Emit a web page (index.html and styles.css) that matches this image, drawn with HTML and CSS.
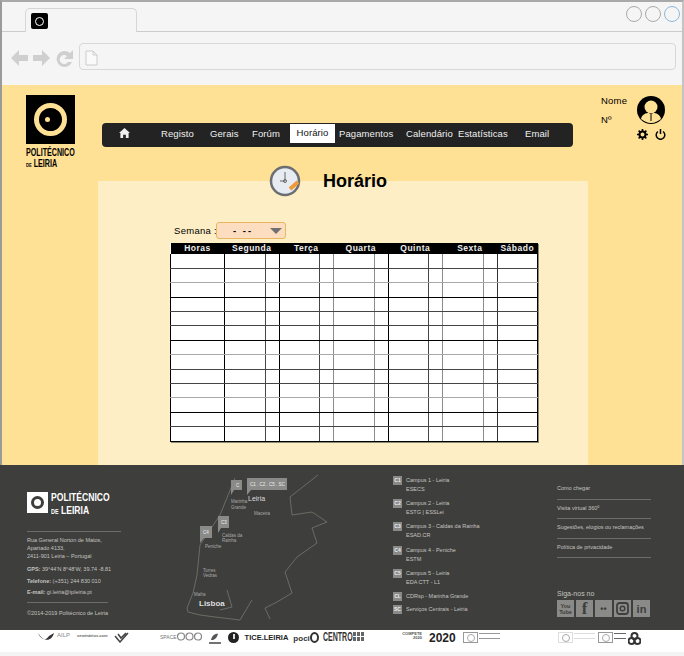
FILE: index.html
```html
<!DOCTYPE html>
<html lang="pt-PT">

<head>
    <meta charset="UTF-8" />
    <meta name="viewport" content="width=device-width, initial-scale=1.0" />
    <title>Horário</title>
    <link rel="stylesheet" href="styles.css">
</head>

<body>
    <div class="browser">
        <div class="tabbar">
            <div class="tab">
                <span class="favicon"><i></i></span>
            </div>
            <div class="win-btns"><span></span><span></span><span class="blue"></span></div>
        </div>
        <div class="toolbar">
            <svg class="tool-icons" width="64" height="20" viewBox="0 0 64 20">
                <path d="M0 10 8 2v5h9v6H8v5z" />
                <path d="M39 10 31 2v5h-9v6h9v5z" />
                <path d="M59 5a8 8 0 1 0 2 9h-4a4.500 4.500 0 1 1-1-6l-3 3h9V2z" />
            </svg>
            <div class="address">
                <svg width="13" height="16" viewBox="0 0 13 16"><path d="M1 1h7l4 4v10H1zM8 1v4h4" fill="#fafafa" stroke="#ccc" /></svg>
            </div>
        </div>
    </div>

    <div class="page">
        <header class="top">
            <div class="logo">
                <div class="logo-box"><i></i></div>
                <div class="logo-text">POLITÉCNICO<br><small>DE</small> LEIRIA</div>
            </div>
            <nav class="menu">
                <a class="home" href="#">
                    <svg width="11" height="10" viewBox="0 0 12 11"><path d="M6 0 0 5.500h1.500V11h3V7.500h3V11h3V5.500H12z" fill="#eee" /></svg>
                </a>
                <a href="#">Registo</a>
                <a href="#">Gerais</a>
                <a href="#">Forúm</a>
                <a class="active" href="#">Horário</a>
                <a class="after-active" href="#">Pagamentos</a>
                <a href="#">Calendário</a>
                <a href="#">Estatísticas</a>
                <a href="#">Email</a>
            </nav>
            <div class="user">
                <div class="user-text">
                    <span>Nome</span>
                    <span>Nº</span>
                </div>
                <div class="user-side">
                    <svg width="28" height="28" viewBox="0 0 28 28">
                        <circle cx="14" cy="14" r="14" fill="#000" />
                        <circle cx="14" cy="11" r="6.500" fill="#ffe195" />
                        <path d="M4 23c1-5 5-6 8-6l2 2 2-2c3 0 7 1 8 6-3 2-6 4-10 4s-7-2-10-4z" fill="#ffe195" />
                        <path d="M14 19v6" stroke="#000" />
                    </svg>
                    <div class="user-icons">
                        <svg width="11" height="11" viewBox="0 0 11 11">
                            <circle cx="5.500" cy="5.500" r="3" fill="none" stroke="#000" stroke-width="2" />
                            <path d="M5.500 0v11M0 5.500h11M1.600 1.600l7.800 7.800M9.400 1.600l-7.800 7.800" stroke="#000" stroke-width="1.600" stroke-dasharray="2 7 2" />
                        </svg>
                        <svg width="11" height="11" viewBox="0 0 11 11">
                            <path d="M3 2.500a4.300 4.300 0 1 0 5 0M5.500 0v5" fill="none" stroke="#000" stroke-width="1.500" />
                        </svg>
                    </div>
                </div>
            </div>
        </header>

        <main class="panel">
            <div class="title-row">
                <svg width="32" height="32" viewBox="0 0 32 32">
                    <circle cx="16" cy="16" r="14" fill="#e6ecf2" stroke="#6b6f73" stroke-width="2.500" />
                    <path d="M16 7v9h-5" fill="none" stroke="#666" stroke-width="1" />
                    <circle cx="16" cy="16" r="1.500" fill="none" stroke="#666" />
                    <path d="M21 24 29 17" stroke="#ee9a3a" stroke-width="4" />
                </svg>
                <h1>Horário</h1>
            </div>

            <div class="week">
                <label>Semana :</label>
                <div class="week-select">
                    <span>- --</span>
                    <i></i>
                </div>
            </div>

            <table class="timetable">
                <colgroup>
                    <col class="c-hour">
                    <col class="c-a"><col class="c-b">
                    <col class="c-a"><col class="c-b">
                    <col class="c-a"><col class="c-b">
                    <col class="c-a"><col class="c-b">
                    <col class="c-a"><col class="c-b">
                    <col class="c-a">
                </colgroup>
                <thead>
                    <tr>
                        <th>Horas</th>
                        <th colspan="2">Segunda</th>
                        <th colspan="2">Terça</th>
                        <th colspan="2">Quarta</th>
                        <th colspan="2">Quinta</th>
                        <th colspan="2">Sexta</th>
                        <th>Sábado</th>
                    </tr>
                </thead>
                <tbody>
                    <tr class="mid"><td></td><td></td><td></td><td></td><td></td><td></td><td></td><td></td><td></td><td></td><td></td><td></td></tr>
                    <tr class="lite"><td></td><td></td><td></td><td></td><td></td><td></td><td></td><td></td><td></td><td></td><td></td><td></td></tr>
                    <tr><td></td><td></td><td></td><td></td><td></td><td></td><td></td><td></td><td></td><td></td><td></td><td></td></tr>
                    <tr class="mid"><td></td><td></td><td></td><td></td><td></td><td></td><td></td><td></td><td></td><td></td><td></td><td></td></tr>
                    <tr class="mid"><td></td><td></td><td></td><td></td><td></td><td></td><td></td><td></td><td></td><td></td><td></td><td></td></tr>
                    <tr><td></td><td></td><td></td><td></td><td></td><td></td><td></td><td></td><td></td><td></td><td></td><td></td></tr>
                    <tr class="lite"><td></td><td></td><td></td><td></td><td></td><td></td><td></td><td></td><td></td><td></td><td></td><td></td></tr>
                    <tr class="mid"><td></td><td></td><td></td><td></td><td></td><td></td><td></td><td></td><td></td><td></td><td></td><td></td></tr>
                    <tr class="mid"><td></td><td></td><td></td><td></td><td></td><td></td><td></td><td></td><td></td><td></td><td></td><td></td></tr>
                    <tr class="lite"><td></td><td></td><td></td><td></td><td></td><td></td><td></td><td></td><td></td><td></td><td></td><td></td></tr>
                    <tr><td></td><td></td><td></td><td></td><td></td><td></td><td></td><td></td><td></td><td></td><td></td><td></td></tr>
                    <tr class="mid"><td></td><td></td><td></td><td></td><td></td><td></td><td></td><td></td><td></td><td></td><td></td><td></td></tr>
                    <tr><td></td><td></td><td></td><td></td><td></td><td></td><td></td><td></td><td></td><td></td><td></td><td></td></tr>
                </tbody>
            </table>
        </main>
    </div>

    <footer class="footer">
        <div class="f-left">
            <div class="f-logo">
                <div class="f-logo-box"><i></i></div>
                <div class="f-logo-text">POLITÉCNICO<br><small>DE</small> LEIRIA</div>
            </div>
            <hr>
            <p class="addr">Rua General Norton de Matos,<br>Apartado 4133,<br>2411-901 Leiria – Portugal</p>
            <p><b>GPS:</b> 39°44'N 8°48'W, 39.74 -8.81</p>
            <p><b>Telefone:</b> (+351) 244 830 010</p>
            <p><b>E-mail:</b> gi.leiria@ipleiria.pt</p>
            <hr class="short">
            <p>©2014-2019 Politécnico de Leiria</p>
        </div>

        <svg class="map" width="200" height="165" viewBox="0 0 200 165">
            <path d="M138 10 110 32 112 50 132 47 147 57 132 63 137 78 117 92 105 107 112 128 97 137 85 143 90 154M72 135 60 155 35 152 20 150 8 147 7 143 13 128 17 110 20 80 40 50 55 13M47 125 52 142 40 145" fill="none" stroke="#77776f" stroke-width=".8" />
            <path d="M51 15h11v10h-8l-3 5zM67 13h40v12H71l-4 5zM38 51h11v12h-8l-3 5zM20 61h12v12h-8l-4 5z" fill="#8a8a88" />
            <text x="56" y="22" class="pin">C</text>
            <text x="70" y="21" class="pin">C1 . C2 . C5 . SC</text>
            <text x="41" y="59" class="pin">C3</text>
            <text x="23" y="69" class="pin">C4</text>
            <text x="68" y="36" class="city">Leiria</text>
            <text x="19" y="141" class="city big">Lisboa</text>
            <text x="51" y="38" class="town">Marinha</text>
            <text x="51" y="44" class="town">Grande</text>
            <text x="74" y="50" class="town">Maceira</text>
            <text x="42" y="72" class="town">Caldas da</text>
            <text x="42" y="77" class="town">Rainha</text>
            <text x="25" y="83" class="town">Peniche</text>
            <text x="23" y="107" class="town">Torres</text>
            <text x="23" y="112" class="town">Vedras</text>
            <text x="14" y="131" class="town">Mafra</text>
        </svg>

        <ul class="campus">
            <li><b>C1</b><span>Campus 1 - Leiria<br>ESECS</span></li>
            <li><b>C2</b><span>Campus 2 - Leiria<br>ESTG | ESSLei</span></li>
            <li><b>C3</b><span>Campus 3 - Caldas da Rainha<br>ESAD.CR</span></li>
            <li><b>C4</b><span>Campus 4 - Peniche<br>ESTM</span></li>
            <li><b>C5</b><span>Campus 5 - Leiria<br>EDA CTT - L1</span></li>
            <li class="single"><b>CL</b><span>CDRsp - Marinha Grande</span></li>
            <li class="single"><b>SC</b><span>Serviços Centrais - Leiria</span></li>
        </ul>

        <div class="f-right">
            <a href="#">Como chegar</a>
            <a href="#">Visita virtual 360º</a>
            <a href="#">Sugestões, elogios ou reclamações</a>
            <a href="#">Política de privacidade</a>
            <p class="follow">Siga-nos no</p>
            <div class="social">
                <span class="s-yt">You<br>Tube</span>
                <span class="s-fb">f</span>
                <span class="s-fl">••</span>
                <span>
                    <svg width="13" height="13" viewBox="0 0 13 13"><rect x="1" y="1" width="11" height="11" rx="2.500" fill="none" stroke="#3e3e3c" stroke-width="1.800" /><circle cx="6.500" cy="6.500" r="2.300" fill="none" stroke="#3e3e3c" stroke-width="1.500" /></svg>
                </span>
                <span class="s-in">in</span>
            </div>
        </div>
    </footer>

    <div class="partners">
        <div class="p-group p-one">
            <svg width="16" height="9" viewBox="0 0 16 9"><path d="M0 1c3 7 8 8 11 3l5-3c-2 8-10 10-16 0z" fill="#333" /></svg>
            <span class="p-ailp">AILP</span>
            <span class="p-sem">seminários.com</span>
            <svg width="15" height="11" viewBox="0 0 15 11"><path d="M1 4l5 6 8-9M4 2l3 4 5-5" fill="none" stroke="#444" stroke-width="1.500" /></svg>
        </div>
        <div class="p-group p-two">
            <span class="p-space">SPACE</span>
            <svg width="25" height="9" viewBox="0 0 25 9"><g fill="none" stroke="#888" stroke-width="1.200"><circle cx="4" cy="4.500" r="3.500" /><circle cx="12.500" cy="4.500" r="3.500" /><circle cx="21" cy="4.500" r="3.500" /></g></svg>
            <svg class="p-gap" width="12" height="12" viewBox="0 0 12 12"><path d="M2 8c1-5 5-7 7-6-1 3-2 5-5 6z" fill="#555" /><path d="M0 11h12" stroke="#444" stroke-width="1.500" /></svg>
            <svg class="p-gap" width="11" height="11" viewBox="0 0 11 11"><circle cx="5.500" cy="5.500" r="5.500" fill="#222" /><path d="M5 2h2v5H5z" fill="#ddd" /></svg>
            <span class="p-tice">TICE.LEIRIA</span>
            <span class="p-poci">poci</span>
            <svg width="9" height="11" viewBox="0 0 9 11"><path d="M1 5.500a3.500 4.500 0 1 1 7 0 3.500 4.500 0 1 1-7 0" fill="none" stroke="#333" stroke-width="2" /></svg>
            <span class="p-centro">CENTRO</span>
            <svg width="11" height="9" viewBox="0 0 11 9"><path d="M0 0h11v9H0z" fill="#666" /><path d="M3.500 0v9M7.500 0v9M0 4.500h11" stroke="#fff" /></svg>
        </div>
        <div class="p-group p-three">
            <span class="p-compete">COMPETE<br>2020</span>
            <span class="p-2020">2020</span>
            <span class="p-eu"></span>
            <span class="p-lines"></span>
        </div>
        <div class="p-group p-four">
            <span class="p-eu pale"></span>
            <span class="p-lines pale"></span>
            <span class="p-eu"></span>
            <span class="p-lines short"></span>
            <svg width="13" height="13" viewBox="0 0 13 13"><g fill="none" stroke="#333" stroke-width="2"><circle cx="6.500" cy="4" r="3" /><circle cx="3.500" cy="9" r="3" /><circle cx="9.500" cy="9" r="3" /></g></svg>
        </div>
    </div>
</body>

</html>
```

FILE: styles.css
```css
* {
    box-sizing: border-box;
}

html,
body {
    margin: 0;
    padding: 0;
}

body {
    width: 684px;
    height: 656px;
    overflow: hidden;
    font-family: "Liberation Sans", Arial, sans-serif;
    color: #000;
    background-color: #fff;
}

/* browser frame */
.browser {
    height: 85px;
    background-color: #f5f5f5;
    border-top: 2px solid #a9a9a9;
    border-left: 2px solid #9a9a9a;
    border-right: 2px solid #c4c4c4;
}

.tabbar {
    height: 30px;
    border-bottom: 1px solid #ccc;
    display: flex;
    justify-content: space-between;
    padding-left: 23px;
    padding-right: 2px;
}

.tab {
    width: 112px;
    height: 24px;
    margin-top: 6px;
    background-color: #f5f5f5;
    border: 1px solid #d6d6d6;
    border-bottom: none;
    border-radius: 5px 5px 0 0;
    padding: 4px 0 0 5px;
}

.favicon {
    display: block;
    width: 17px;
    height: 16px;
    background-color: #000;
    border-radius: 2px;
    padding: 4px;
}

.favicon i {
    display: block;
    width: 9px;
    height: 9px;
    border: 1.500px solid #fff;
    border-radius: 50%;
}

.win-btns {
    display: flex;
    gap: 3px;
    margin-top: 4px;
}

.win-btns span {
    width: 16px;
    height: 16px;
    border: 1px solid #aaa;
    border-radius: 50%;
}

.win-btns .blue {
    border-color: #8db8dc;
}

.toolbar {
    display: flex;
    padding: 11px 6px 0 9px;
}

.tool-icons {
    fill: #cfcfcf;
    margin-top: 5px;
    width: 64px;
    flex: none;
}

.address {
    flex: 1;
    margin-left: 4px;
    height: 27px;
    background-color: #f5f5f5;
    border: 1px solid #d8d8d8;
    border-radius: 4px;
    padding: 6px 0 0 5px;
}

/* page */
.page {
    height: 380px;
    background-color: #ffe195;
    border-left: 2px solid #9a9a9a;
    border-right: 2px solid #c4c4c4;
}

.top {
    height: 96px;
    display: flex;
    align-items: flex-start;
    padding-left: 24px;
}

.logo {
    width: 49px;
    margin-top: 10px;
}

.logo-box {
    width: 49px;
    height: 49px;
    background-color: #000;
    padding: 8px;
}

.logo-box i {
    display: block;
    width: 33px;
    height: 33px;
    border: 5px solid #ffe195;
    border-radius: 50%;
    position: relative;
}

.logo-box i::after {
    content: "";
    position: absolute;
    left: 6px;
    top: 9px;
    width: 5px;
    height: 5px;
    border-radius: 50%;
    background-color: #ffe195;
}

.logo-text {
    margin-top: 3px;
    font-size: 10.500px;
    line-height: 11px;
    font-weight: bold;
    white-space: nowrap;
    transform: scaleX(.68);
    transform-origin: left top;
}

.logo-text small {
    font-size: 6px;
}

.menu {
    width: 471px;
    height: 24px;
    margin-left: 27px;
    margin-top: 38px;
    padding-bottom: 4px;
    background-color: #232323;
    border-radius: 4px;
    display: grid;
    grid-template-columns: 59px 49px 42px 38px 45px 71px 52px 67px 1fr;
    align-items: center;
    font-size: 9.500px;
    letter-spacing: .1px;
}

.menu a {
    color: #f0f0f0;
    text-decoration: none;
    white-space: nowrap;
}

.menu .home {
    padding-left: 17px;
    height: 10px;
    line-height: 0;
}

.menu .active {
    background-color: #fff;
    color: #111;
    height: 19px;
    line-height: 17px;
    text-align: center;
    align-self: start;
    margin-top: 1px;
}

.menu .after-active {
    padding-left: 4px;
}

.user {
    display: flex;
    margin-left: 28px;
    margin-top: 10px;
    font-size: 9.500px;
    letter-spacing: .2px;
}

.user-text {
    display: flex;
    flex-direction: column;
    gap: 7px;
    width: 35px;
    line-height: 12px;
}

.user-side {
    display: flex;
    flex-direction: column;
    align-items: center;
    width: 30px;
    margin-top: 1px;
}

.user-icons {
    display: flex;
    gap: 7px;
    margin-top: 5px;
    margin-left: 1px;
}

.panel {
    display: flow-root;
    width: 490px;
    height: 284px;
    margin-left: 96px;
    background-color: #fdeec5;
}

.title-row {
    display: flex;
    align-items: center;
    height: 32px;
    margin-top: -16px;
    padding-left: 171px;
}

.title-row h1 {
    margin: 0 0 0 22px;
    font-size: 18px;
    line-height: 22px;
    font-weight: bold;
}

.week {
    display: flex;
    align-items: center;
    margin-top: 25px;
    padding-left: 76px;
    font-size: 9.500px;
    letter-spacing: .3px;
}

.week label {
    width: 42px;
    white-space: nowrap;
}

.week-select {
    width: 70px;
    height: 17px;
    background-color: #fdddc0;
    border: 1px solid #e8b860;
    border-radius: 3px;
    display: flex;
    align-items: center;
    padding-left: 16px;
    letter-spacing: 2px;
    font-weight: bold;
}

.week-select span {
    width: 37px;
}

.week-select i {
    width: 0;
    height: 0;
    border-left: 6px solid transparent;
    border-right: 6px solid transparent;
    border-top: 6px solid #707070;
}

/* timetable */
.timetable {
    width: 367px;
    margin-left: 72px;
    margin-top: 4px;
    border-collapse: collapse;
    table-layout: fixed;
    background-color: #fff;
    box-shadow: 1px 1px 0 #8a8a70;
}

.c-hour {
    width: 54px;
}

.c-a {
    width: 40.500px;
}

.c-b {
    width: 14px;
}

.timetable th {
    height: 11px;
    padding: 0;
    background-color: #000;
    color: #eee;
    font-size: 8.500px;
    line-height: 11px;
    letter-spacing: .5px;
    font-weight: bold;
}

.timetable td {
    height: 14.400px;
    padding: 0;
    border-bottom: 1px solid #000;
    border-left: 1px solid #000;
}

.timetable td:last-child {
    border-right: 1px solid #000;
}

.timetable .mid td {
    border-bottom-color: #444;
}

.timetable .lite td {
    border-bottom-color: #a8a8a8;
}

.timetable td:nth-child(3),
.timetable td:nth-child(5),
.timetable td:nth-child(9) {
    border-left-color: #444;
}

.timetable td:nth-child(6),
.timetable td:nth-child(7),
.timetable td:nth-child(10),
.timetable td:nth-child(11) {
    border-left-color: #8c8c8c;
}

.timetable td:last-child {
    border-left-color: #333;
}

/* footer */
.footer {
    height: 165px;
    background-color: #3e3e3c;
    color: #c4c4c0;
    font-size: 5.500px;
    display: flex;
}

.f-left {
    width: 180px;
    padding: 26px 0 0 27px;
}

.f-logo {
    display: flex;
    gap: 3px;
    height: 24px;
}

.f-logo-box {
    width: 21px;
    height: 21px;
    margin-top: 1px;
    background-color: #fff;
    padding: 4px;
}

.f-logo-box i {
    display: block;
    width: 13px;
    height: 13px;
    border: 3px solid #3e3e3c;
    border-radius: 50%;
}

.f-logo-text {
    color: #fff;
    font-size: 11px;
    line-height: 13px;
    font-weight: bold;
    white-space: nowrap;
    transform: scaleX(.78);
    transform-origin: left top;
}

.f-logo-text small {
    font-size: 7px;
}

.f-left hr {
    width: 94px;
    margin: 16px 0 4px;
    border: none;
    border-top: 1px solid #6c6c68;
}

.f-left hr.short {
    width: 81px;
    margin: 6px 0 7px;
}

.f-left p {
    margin: 0 0 4.500px;
    line-height: 7px;
    white-space: nowrap;
}

.f-left .addr {
    line-height: 8px;
    margin-bottom: 6px;
}

.map {
    flex: none;
    width: 200px;
}

.map .pin {
    fill: #eee;
    font-size: 4.500px;
}

.map .city {
    fill: #ddd;
    font-size: 7px;
}

.map .city.big {
    font-size: 8px;
    font-weight: bold;
}

.map .town {
    fill: #aaa;
    font-size: 4.500px;
}

.campus {
    list-style: none;
    width: 177px;
    margin: 0;
    padding: 11px 0 0 13px;
    line-height: 9px;
}

.campus li {
    display: flex;
    gap: 3px;
    height: 23.200px;
    white-space: nowrap;
}

.campus li.single {
    height: 13px;
}

.campus b {
    width: 9px;
    height: 9px;
    margin-right: 1px;
    background-color: #8a8a88;
    color: #eee;
    font-size: 5px;
    text-align: center;
}

.f-right {
    width: 94px;
    padding-top: 15px;
}

.f-right a {
    display: block;
    height: 19.600px;
    line-height: 17px;
    color: #c4c4c0;
    text-decoration: none;
    white-space: nowrap;
    border-bottom: 1px solid #6c6c68;
}

.follow {
    margin: 31px 0 0;
    font-size: 7px;
    line-height: 9px;
}

.social {
    display: flex;
    gap: 2px;
    margin-top: 2px;
}

.social span {
    width: 17px;
    height: 17px;
    background-color: #8a8a88;
    color: #3e3e3c;
    font-weight: bold;
    text-align: center;
    display: flex;
    align-items: center;
    justify-content: center;
    flex: none;
}

.social .s-yt {
    font-size: 5.500px;
    line-height: 6px;
}

.social .s-fb {
    font-size: 17px;
    font-family: "Liberation Serif", serif;
}

.social .s-fl {
    font-size: 9px;
}

.social .s-in {
    font-size: 11px;
}

/* partner logos */
.partners {
    height: 26px;
    display: flex;
    background: linear-gradient(#fff 22px, #f4f4f4 22px);
    padding-left: 38px;
    padding-top: 2px;
}

.p-group {
    display: flex;
    align-items: flex-start;
    white-space: nowrap;
}

.p-one {
    width: 122px;
}

.p-two {
    width: 237px;
}

.p-three {
    width: 161px;
}

.p-ailp {
    margin-left: 3px;
    font-size: 6px;
    color: #888;
}

.p-sem {
    margin: 1px 7px 0;
    font-size: 4px;
    color: #666;
    font-weight: bold;
}

.p-space {
    font-size: 5px;
    color: #777;
    margin-top: 2px;
}

.p-gap {
    margin-left: 7px;
}

.p-tice {
    margin: 1px 5px 0 6px;
    font-size: 7.500px;
    font-weight: bold;
    color: #222;
}

.p-poci {
    margin-top: 2px;
    font-size: 8px;
    font-weight: bold;
    color: #333;
}

.p-centro {
    width: 30px;
    margin: -2px 0 0 4px;
    font-size: 13px;
    line-height: 14px;
    font-weight: bold;
    color: #333;
    transform: scaleX(.54);
    transform-origin: left top;
}

.p-compete {
    width: 25px;
    font-size: 4px;
    line-height: 4px;
    font-weight: bold;
    text-align: right;
    color: #555;
}

.p-2020 {
    margin-left: 7px;
    width: 34px;
    font-size: 12px;
    line-height: 12px;
    font-weight: bold;
    color: #222;
}

.p-eu {
    width: 15px;
    height: 11px;
    border: 1px solid #999;
    background-color: #fff;
    display: flex;
    align-items: center;
    justify-content: center;
}

.p-eu::after {
    content: "";
    width: 6px;
    height: 6px;
    border: 1px solid #aaa;
    border-radius: 50%;
}

.p-eu.pale {
    border-color: #ddd;
}

.p-lines {
    width: 21px;
    height: 6px;
    margin: 1px 0 0 1px;
    border-top: 1px solid #999;
    border-bottom: 1px solid #999;
}

.p-lines.pale {
    border-color: #ddd;
    margin-right: 3px;
}

.p-lines.short {
    width: 12px;
    margin-right: 2px;
    border-color: #666;
}
```
